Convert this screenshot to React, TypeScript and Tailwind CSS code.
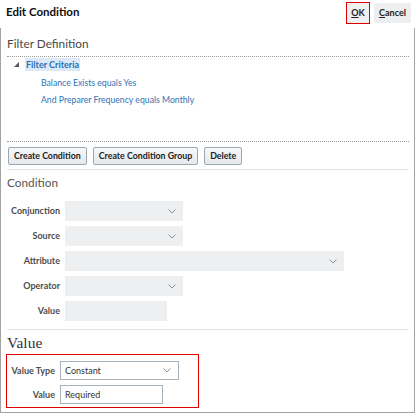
import React from "react";

const Chevron = () => (
  <svg width="8" height="5" viewBox="0 0 8 5" className="shrink-0">
    <polyline points="0.5,0.5 4,4 7.5,0.5" fill="none" stroke="#8a9299" strokeWidth="1" />
  </svg>
);

function Field({ label, width, select = true }: { label: string; width: string; select?: boolean }) {
  return (
    <div className="flex items-center h-[20px]">
      <div className="w-[64px] pr-[5px] text-right text-[9px] font-bold text-[#4d4d4d]">{label}</div>
      <div className={`${width} h-[20px] bg-[#eeeff0] flex items-center justify-end pr-[7px]`}>
        {select && <Chevron />}
      </div>
    </div>
  );
}

export default function App() {
  return (
    <div className="w-[415px] h-[413px] bg-white font-['Lato','Liberation_Sans',sans-serif] text-[#333]">
      {/* header */}
      <div className="h-[28px] flex items-start justify-between">
        <div className="pl-[6px] pt-[3px] text-[11.5px] font-bold text-[#111] leading-[18px]">Edit Condition</div>
        <div className="flex items-start pr-[4px] pt-[2px] gap-[4px]">
          <div className="w-[24px] h-[22px] border border-[#e00000] bg-[#eef0f1] flex items-center justify-center text-[9px] font-bold text-[#222]">
            <span>
              <span className="underline">O</span>K
            </span>
          </div>
          <div className="mt-[1px] w-[37px] h-[20px] rounded-[2px] bg-[#eceef0] flex items-center justify-center text-[9px] font-bold text-[#222]">
            <span>
              <span className="underline">C</span>ancel
            </span>
          </div>
        </div>
      </div>

      {/* body */}
      <div className="h-[385px] border-l border-r border-b border-[#a3a3a3] flex flex-col">
        <div className="mt-[8px] pl-[6px] h-[16px] leading-[16px] text-[11.8px] text-[#484848]">Filter Definition</div>
        <div className="mt-[4px] ml-[6px] mr-[5px] border-t border-dotted border-[#9a9a9a]" />

        <div className="mt-[1px] h-[13px] flex items-center">
          <svg width="5" height="5" viewBox="0 0 5 5" className="ml-[13px] mr-[6px]">
            <polygon points="5,0 5,5 0,5" fill="#555" />
          </svg>
          <span className="px-[1px] bg-[#dceaf7] text-[9px] font-bold text-[#2a6fb5] leading-[13px]">Filter Criteria</span>
        </div>
        <div className="mt-[5px] h-[14px] pl-[40px] text-[8.7px] text-[#2f73b6] leading-[14px]">Balance Exists equals Yes</div>
        <div className="mt-[3px] h-[14px] pl-[40px] text-[8.7px] text-[#2f73b6] leading-[14px]">
          And Preparer Frequency equals Monthly
        </div>

        <div className="mt-[34px] ml-[6px] mr-[5px] border-t border-dotted border-[#9a9a9a]" />

        <div className="mt-[5px] pl-[7px] flex gap-[6px]">
          {["Create Condition", "Create Condition Group", "Delete"].map((b) => (
            <div
              key={b}
              className="h-[18px] px-[5px] flex items-center border border-[#9aa6b0] rounded-[2px] bg-gradient-to-b from-[#f6f7f8] to-[#e6e9ec] text-[8.8px] font-bold text-[#222]"
            >
              {b}
            </div>
          ))}
        </div>

        <div className="mt-[4px] ml-[6px] mr-[5px] border-t border-[#dfe5ea]" />

        <div className="mt-[5px] pl-[6px] h-[16px] leading-[16px] text-[11.8px] text-[#555]">Condition</div>

        <div className="mt-[10px] flex flex-col gap-[5px]">
          <Field label="Conjunction" width="w-[118px]" />
          <Field label="Source" width="w-[118px]" />
          <Field label="Attribute" width="w-[279px]" />
          <Field label="Operator" width="w-[118px]" />
          <Field label="Value" width="w-[102px]" select={false} />
        </div>

        <div className="mt-[8px] ml-[6px] mr-[5px] border-t border-[#dfe5ea]" />

        <div className="mt-[4px] pl-[6px] h-[18px] leading-[18px] text-[15.5px] text-[#333] font-['Liberation_Serif',serif]">
          Value
        </div>

        <div className="mt-[2px] ml-[5px] w-[193px] h-[54px] border border-[#e00000] flex flex-col gap-[5px] pt-[6px]">
          <div className="flex items-center h-[19px]">
            <div className="w-[53px] pr-[5px] text-right text-[9px] font-bold text-[#4d4d4d] whitespace-nowrap">Value Type</div>
            <div className="w-[119px] h-[19px] border border-[#a9b3bc] bg-white flex items-center justify-between pl-[4px] pr-[7px] text-[9px] text-[#333]">
              <span>Constant</span>
              <Chevron />
            </div>
          </div>
          <div className="flex items-center h-[19px]">
            <div className="w-[53px] pr-[5px] text-right text-[9px] font-bold text-[#4d4d4d]">Value</div>
            <div className="w-[103px] h-[19px] border border-[#a9b3bc] bg-white flex items-center pl-[4px] text-[9px] text-[#333]">
              Required
            </div>
          </div>
        </div>
      </div>
    </div>
  );
}
